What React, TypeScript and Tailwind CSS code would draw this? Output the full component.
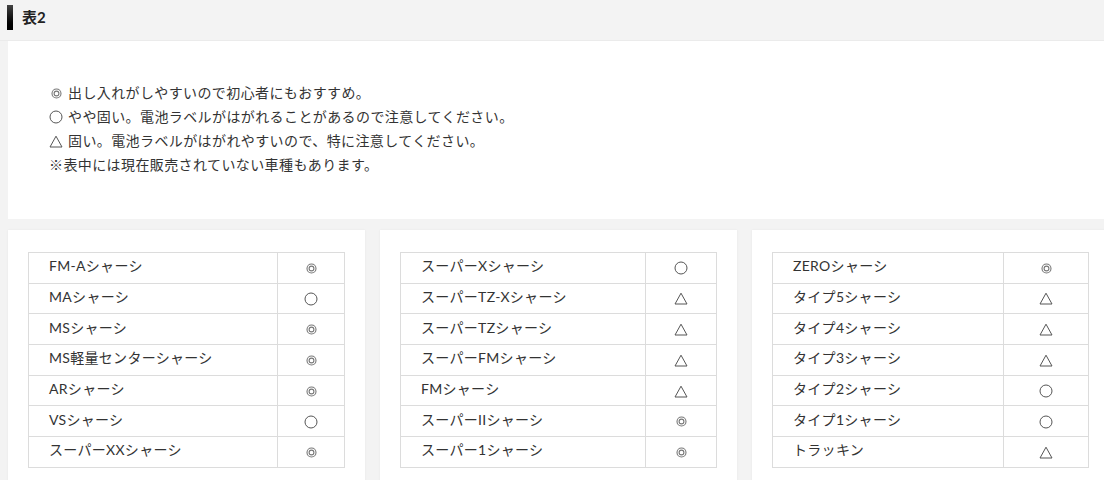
import React from "react";

type Row = {
  name: string;
  mark: string;
};

const tables: { col: string; rows: Row[] }[] = [
  {
    col: "w-[249px]",
    rows: [
      { name: "FM-Aシャーシ", mark: "◎" },
      { name: "MAシャーシ", mark: "○" },
      { name: "MSシャーシ", mark: "◎" },
      { name: "MS軽量センターシャーシ", mark: "◎" },
      { name: "ARシャーシ", mark: "◎" },
      { name: "VSシャーシ", mark: "○" },
      { name: "スーパーXXシャーシ", mark: "◎" },
    ],
  },
  {
    col: "w-[245px]",
    rows: [
      { name: "スーパーXシャーシ", mark: "○" },
      { name: "スーパーTZ-Xシャーシ", mark: "△" },
      { name: "スーパーTZシャーシ", mark: "△" },
      { name: "スーパーFMシャーシ", mark: "△" },
      { name: "FMシャーシ", mark: "△" },
      { name: "スーパーIIシャーシ", mark: "◎" },
      { name: "スーパー1シャーシ", mark: "◎" },
    ],
  },
  {
    col: "w-[231px]",
    rows: [
      { name: "ZEROシャーシ", mark: "◎" },
      { name: "タイプ5シャーシ", mark: "△" },
      { name: "タイプ4シャーシ", mark: "△" },
      { name: "タイプ3シャーシ", mark: "△" },
      { name: "タイプ2シャーシ", mark: "○" },
      { name: "タイプ1シャーシ", mark: "○" },
      { name: "トラッキン", mark: "△" },
    ],
  },
];

const notes = [
  { mark: "◎", text: "出し入れがしやすいので初心者にもおすすめ。" },
  { mark: "○", text: "やや固い。電池ラベルがはがれることがあるので注意してください。" },
  { mark: "△", text: "固い。電池ラベルがはがれやすいので、特に注意してください。" },
  { mark: "", text: "※表中には現在販売されていない車種もあります。" },
];

function Mark({ mark }: { mark: string }) {
  if (mark === "◎") {
    return (
      <svg width="11" height="11" viewBox="0 0 11 11" className="inline-block">
        <circle cx="5.5" cy="5.5" r="4.5" fill="none" stroke="#777" strokeWidth="1.1" />
        <circle cx="5.5" cy="5.5" r="2.4" fill="none" stroke="#777" strokeWidth="1.1" />
      </svg>
    );
  }
  if (mark === "○") {
    return (
      <svg width="14" height="14" viewBox="0 0 14 14" className="inline-block">
        <circle cx="7" cy="7" r="6" fill="none" stroke="#555" strokeWidth="1" />
      </svg>
    );
  }
  return (
    <svg width="14" height="13" viewBox="0 0 14 13" className="inline-block">
      <path d="M7 1.2 L13 12 L1 12 Z" fill="none" stroke="#555" strokeWidth="1" />
    </svg>
  );
}

export default function App() {
  return (
    <div
      className="w-[1104px] h-[480px] overflow-hidden bg-[#f3f3f3] text-[#333]"
      style={{ fontFamily: '"Lato", "Noto Sans CJK JP", sans-serif' }}
    >
      <div className="h-[41px] flex items-center pl-[7px] gap-[9px] border-b border-[#ebebeb]">
        <div className="w-[6px] h-[25px] bg-gradient-to-b from-[#444] to-[#000] -mt-[5px]" />
        <h2 className="font-bold text-[15px] text-[#222] -mt-[5px]">表2</h2>
      </div>

      <div className="ml-2 w-[1100px] bg-white pt-[40px] pb-[42px] pl-[41px] text-[14px] leading-[24px] tracking-[0.4px]">
        {notes.map((n, i) => (
          <p key={i} className="flex items-center">
            {n.mark && (
              <span className="inline-flex w-[14px] justify-center mr-[5px]">
                <Mark mark={n.mark} />
              </span>
            )}
            <span>{n.text}</span>
          </p>
        ))}
      </div>

      <div className="flex gap-[15px] ml-2 mt-[11px] w-[1110px]">
        {tables.map((t, ti) => (
          <div key={ti} className="w-[357px] shrink-0 bg-white pt-[22px] px-5 pb-6 shadow-[0_0_2px_rgba(0,0,0,0.06)]">
            <table className="w-[317px] border-collapse text-[14px] tracking-[0.3px]">
              <tbody>
                {t.rows.map((r, ri) => (
                  <tr key={ri} className="h-[30.7px]">
                    <td className={`${t.col} border border-[#dcdcdc] pl-5 pt-0 pb-[3px] leading-[20px]`}>
                      {r.name}
                    </td>
                    <td className="border border-[#dcdcdc] text-center pt-0 pb-[2px] leading-[20px]">
                      <Mark mark={r.mark} />
                    </td>
                  </tr>
                ))}
              </tbody>
            </table>
          </div>
        ))}
      </div>
    </div>
  );
}
